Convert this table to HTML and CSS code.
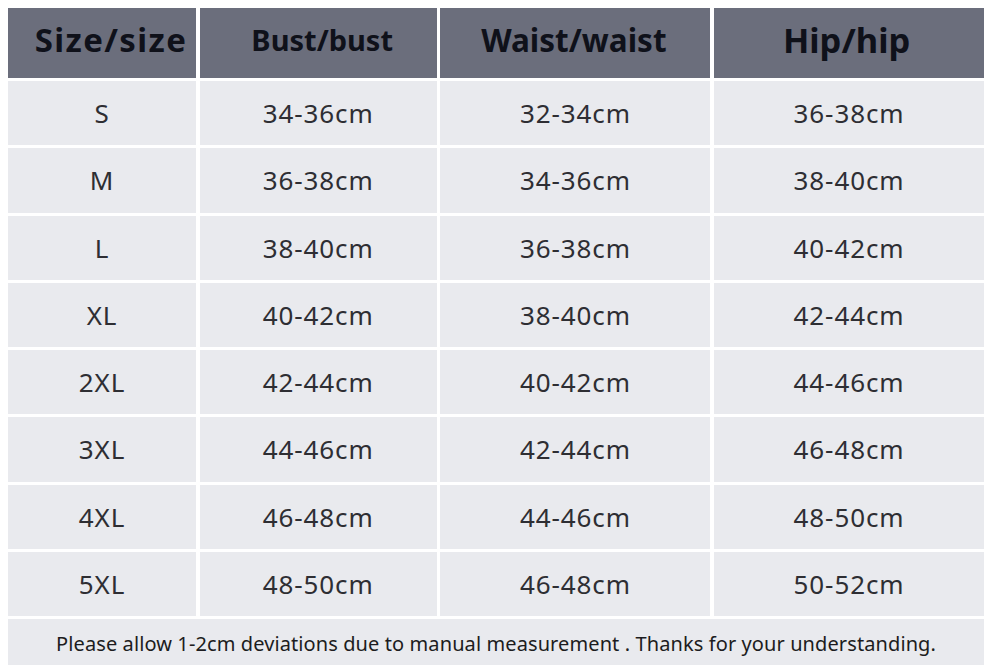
FILE: index.html
```html
<!DOCTYPE html>
<html>
<head>
<meta charset="utf-8">
<link rel="stylesheet" href="styles.css">
</head>
<body>
<div class="chart">
  <div class="head h1">Size/size</div>
  <div class="head h2">Bust/bust</div>
  <div class="head h3">Waist/waist</div>
  <div class="head h4">Hip/hip</div>

  <div class="cell">S</div><div class="cell">34-36cm</div><div class="cell">32-34cm</div><div class="cell">36-38cm</div>
  <div class="cell">M</div><div class="cell">36-38cm</div><div class="cell">34-36cm</div><div class="cell">38-40cm</div>
  <div class="cell">L</div><div class="cell">38-40cm</div><div class="cell">36-38cm</div><div class="cell">40-42cm</div>
  <div class="cell">XL</div><div class="cell">40-42cm</div><div class="cell">38-40cm</div><div class="cell">42-44cm</div>
  <div class="cell">2XL</div><div class="cell">42-44cm</div><div class="cell">40-42cm</div><div class="cell">44-46cm</div>
  <div class="cell">3XL</div><div class="cell">44-46cm</div><div class="cell">42-44cm</div><div class="cell">46-48cm</div>
  <div class="cell">4XL</div><div class="cell">46-48cm</div><div class="cell">44-46cm</div><div class="cell">48-50cm</div>
  <div class="cell">5XL</div><div class="cell">48-50cm</div><div class="cell">46-48cm</div><div class="cell">50-52cm</div>

  <div class="note">Please allow 1-2cm deviations due to manual measurement . Thanks for your understanding.</div>
</div>
</body>
</html>
```
FILE: styles.css
```css
html, body {
  margin: 0;
  padding: 0;
  background: #ffffff;
}
body {
  padding: 8px 14px 0 8px;
  height: 667px;
  box-sizing: border-box;
  overflow: hidden;
}
.chart {
  display: grid;
  grid-template-columns: 188px 237px 270px 270px;
  grid-template-rows: 70px repeat(8, 64.25px) 46px;
  column-gap: 3.7px;
  row-gap: 3px;
  font-family: "Noto Sans", "Open Sans", sans-serif;
}
.head {
  background: #6b6e7c;
  color: #0f111a;
  font-weight: 700;
  display: flex;
  align-items: center;
  justify-content: center;
  padding-bottom: 8px;
  box-sizing: border-box;
  font-size: 31px;
}
.h1 { font-size: 33px; letter-spacing: 1.4px; padding-left: 18px; }
.h2 { font-size: 29px; padding-left: 8px; }
.h3 { font-size: 31.5px; padding-right: 3px; }
.h4 { font-size: 34.5px; padding-right: 5px; }
.cell {
  background: #e9eaee;
  color: #2e2e33;
  font-size: 26px;
  letter-spacing: 0.9px;
  display: flex;
  align-items: center;
  justify-content: center;
}
.note {
  grid-column: 1 / -1;
  background: #e9eaee;
  color: #1c1c20;
  font-size: 20px;
  letter-spacing: 0.1px;
  display: flex;
  align-items: center;
  justify-content: center;
  padding-top: 2px;
  box-sizing: border-box;
}
```
